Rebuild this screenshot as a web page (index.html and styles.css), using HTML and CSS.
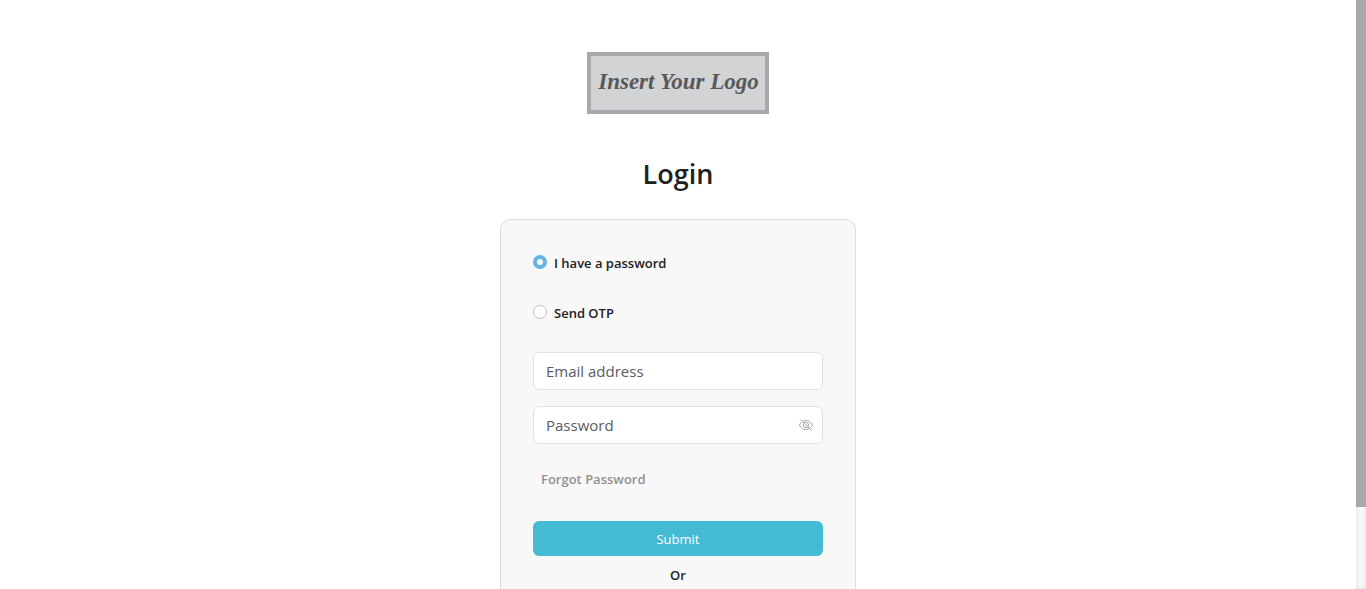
FILE: index.html
```html
<!DOCTYPE html>
<html lang="en">
<head>
<meta charset="utf-8">
<meta name="viewport" content="width=device-width, initial-scale=1">
<title>Login</title>
<link rel="stylesheet" href="styles.css">
</head>
<body>
<div class="page">
  <main class="content">
    <div class="logo">Insert Your Logo</div>
    <h1 class="title">Login</h1>
    <form class="card">
      <label class="choice"><input class="radio" type="radio" name="method" checked><span>I have a password</span></label>
      <label class="choice"><input class="radio" type="radio" name="method"><span>Send OTP</span></label>
      <input class="field" type="email" placeholder="Email address" aria-label="Email address">
      <div class="password">
        <input class="field" type="password" placeholder="Password" aria-label="Password">
        <button class="reveal" type="button" aria-label="Show password">
          <svg width="16" height="16" viewBox="0 0 16 16" fill="none" stroke="#a8a8a8" stroke-width="1">
            <path d="M1.300 8C3 5 5.400 3.500 8 3.500S13 5 14.700 8C13 11 10.600 12.500 8 12.500S3 11 1.300 8Z"/>
            <circle cx="8" cy="8" r="2.600"/>
            <path d="M2.500 2.500 13.500 13.500"/>
          </svg>
        </button>
      </div>
      <a class="forgot" href="#">Forgot Password</a>
      <button class="submit" type="submit">Submit</button>
      <p class="or">Or</p>
    </form>
  </main>
  <div class="track"><div class="thumb"></div></div>
</div>
</body>
</html>
```
FILE: styles.css
```css
* {
  box-sizing: border-box;
}

body {
  margin: 0;
  background: #fff;
  color: #212121;
  font-family: "Open Sans", "Noto Sans", sans-serif;
}

.page {
  display: flex;
  height: 100vh;
  overflow: hidden;
}

.content {
  flex: 1;
  display: flex;
  flex-direction: column;
  align-items: center;
  padding-top: 52px;
}

.logo {
  flex: none;
  padding: 13px 6px 15px 7px;
  border: 4px solid #a7a9ac;
  background: #d1d3d4;
  color: #58595b;
  font: italic bold 23px/26px "Liberation Serif", serif;
  white-space: nowrap;
}

.title {
  margin: 43px 0 29px;
  font-size: 27px;
  font-weight: 600;
  line-height: 33px;
}

.card {
  flex: none;
  display: flex;
  flex-direction: column;
  width: 100%;
  max-width: 356px;
  padding: 32px;
  border: 1px solid #dedede;
  border-radius: 10px;
  background: #f8f8f8;
}

.choice {
  display: flex;
  align-items: center;
  gap: 7px;
  margin-bottom: 28px;
  font-size: 13px;
  font-weight: 600;
  line-height: 22px;
}

.radio {
  appearance: none;
  width: 14px;
  height: 14px;
  margin: 0 0 2px;
  border: 1px solid #bfbfbf;
  border-radius: 50%;
  background: #fff;
}

.radio:checked {
  border: 4px solid #63b5e5;
}

.field {
  width: 100%;
  height: 38px;
  padding: 0 12px;
  border: 1px solid #dee2e6;
  border-radius: 6px;
  background: #fff;
  color: #212529;
  font: 15px "Open Sans", "Noto Sans", sans-serif;
}

.field::placeholder {
  color: #595c5f;
  opacity: 1;
}

.password {
  position: relative;
  margin-top: 16px;
}

.reveal {
  position: absolute;
  top: 11px;
  right: 9px;
  display: flex;
  padding: 0;
  border: 0;
  background: none;
}

.forgot {
  align-self: flex-start;
  margin: 24px 8px 31px;
  color: #919191;
  font-size: 13px;
  font-weight: 600;
  line-height: 22px;
  text-decoration: none;
}

.submit {
  height: 35px;
  padding: 0;
  border: 0;
  border-radius: 6px;
  background: #45bbd3;
  color: #fff;
  font: 13px "Open Sans", "Noto Sans", sans-serif;
}

.or {
  margin: 8px 0 0;
  font-size: 13px;
  font-weight: 600;
  line-height: 22px;
  text-align: center;
}

.track {
  width: 10px;
  background: #f7f7f7;
  box-shadow: inset 0 0 4px #dedede;
}

.thumb {
  height: 86%;
  background: #a9a9a9;
}
```
